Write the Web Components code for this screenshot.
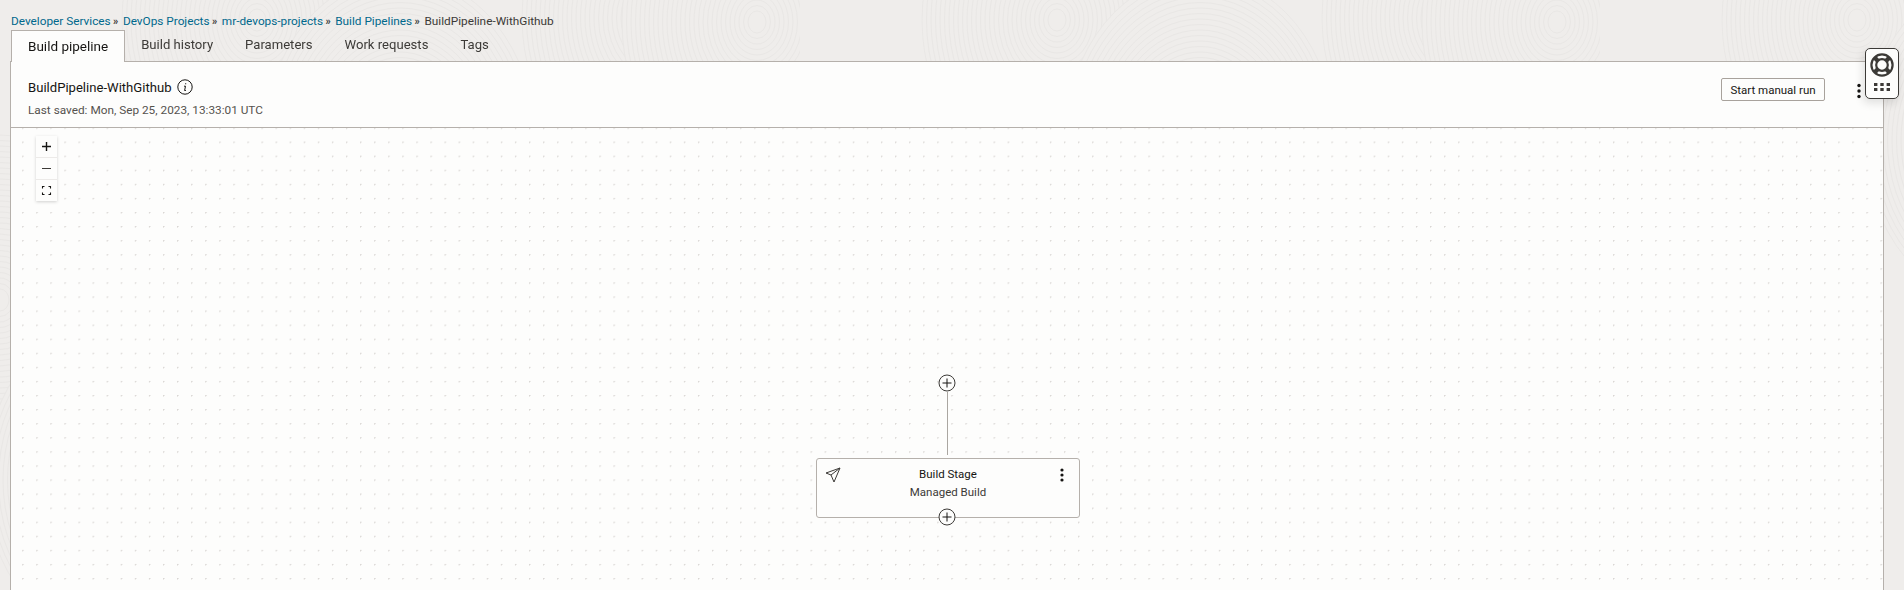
<!DOCTYPE html>
<html lang="en">
<head>
<meta charset="utf-8">
<title>BuildPipeline-WithGithub</title>
<style>
    html, body { margin: 0; height: 590px; overflow: hidden; }
    body { font-family: Roboto, "Liberation Sans", sans-serif; color: #161513; background: #efedeb; }
</style>
</head>
<body>
<pipeline-page></pipeline-page>
<help-widget></help-widget>

<script>
class CrumbTrail extends HTMLElement {
    constructor() {
        super();
        this.attachShadow({ mode: 'open' });
    }

    connectedCallback() {
        const links = ['Developer Services', 'DevOps Projects', 'mr-devops-projects', 'Build Pipelines'];
        this.shadowRoot.innerHTML = `
            <style>
                :host { display: flex; align-items: center; height: 30px; padding: 12px 0 0 11px; box-sizing: border-box; font-size: 11.8px; color: #3c3a37; }
                a { color: #00688c; text-decoration: none; }
                i { font-style: normal; margin: 0 4.6px 0 2.4px; font-size: 10.5px; font-weight: 700; }
            </style>
            ${links.map(l => `<a href="#">${l}</a><i>&raquo;</i>`).join('')}
            <span>BuildPipeline-WithGithub</span>
        `;
    }
}

class TabBar extends HTMLElement {
    constructor() {
        super();
        this.attachShadow({ mode: 'open' });
    }

    connectedCallback() {
        const tabs = ['Build pipeline', 'Build history', 'Parameters', 'Work requests', 'Tags'];
        this.shadowRoot.innerHTML = `
            <style>
                :host { display: flex; height: 32px; margin-left: 11px; position: relative; z-index: 1; font-size: 13.1px; color: #3c3a37; }
                div { padding: 0 16px; height: 29px; display: flex; align-items: center; }
                div.active { color: #161513; font-size: 13.5px; background: #fdfdfc; border: 1px solid #b5b0ab; border-bottom: none; height: 32px; padding: 0 16px 2px; box-sizing: border-box; }
            </style>
            ${tabs.map((t, i) => `<div class="${i === 0 ? 'active' : ''}">${t}</div>`).join('')}
        `;
    }
}

class PipelineHeader extends HTMLElement {
    constructor() {
        super();
        this.attachShadow({ mode: 'open' });
    }

    connectedCallback() {
        this.shadowRoot.innerHTML = `
            <style>
                :host { display: flex; justify-content: space-between; height: 66px; box-sizing: border-box; padding: 15px 21px 0 17px; background: #fdfdfc; border-bottom: 1px solid #b5b0ab; }
                .title { display: flex; align-items: center; gap: 5px; font-size: 13.1px; height: 20px; }
                .saved { margin-top: 5px; font-size: 11.8px; line-height: 16px; color: #55524e; }
                .actions { display: flex; align-items: flex-start; gap: 31px; padding-top: 1px; }
                button { font: inherit; font-size: 11.5px; height: 23px; width: 104px; padding: 1px 0 0; background: #fdfdfc; color: #161513; border: 1px solid #a8a29c; border-radius: 2px; }
                svg { display: block; }
            </style>
            <div>
                <div class="title">
                    <span>BuildPipeline-WithGithub</span>
                    <svg width="16" height="16" viewBox="0 0 16 16" fill="none" stroke="#161513">
                        <circle cx="8" cy="8" r="7.2"/>
                        <path d="M8.7 4.2v1.1M7 7.2h1.5L7.6 11.5h1.3"/>
                    </svg>
                </div>
                <div class="saved">Last saved: Mon, Sep 25, 2023, 13:33:01 UTC</div>
            </div>
            <div class="actions">
                <button>Start manual run</button>
                <svg width="6" height="16" viewBox="0 0 6 16" fill="#161513" style="margin-top:5px">
                    <circle cx="3" cy="2.5" r="1.7"/><circle cx="3" cy="8" r="1.7"/><circle cx="3" cy="13.5" r="1.7"/>
                </svg>
            </div>
        `;
    }
}

class ZoomControls extends HTMLElement {
    constructor() {
        super();
        this.attachShadow({ mode: 'open' });
    }

    connectedCallback() {
        this.shadowRoot.innerHTML = `
            <style>
                :host { display: block; position: absolute; left: 25px; top: 8px; width: 21px; background: #fdfdfc; box-shadow: 0 1px 3px rgba(0,0,0,.18); }
                div { height: 22px; display: flex; align-items: center; justify-content: center; border-bottom: 1px solid #eceae8; box-sizing: border-box; }
                div:last-child { border: none; height: 21px; }
            </style>
            <div><svg width="11" height="11" viewBox="0 0 11 11" stroke="#161513" stroke-width="1.4"><path d="M5.5 1v9M1 5.5h9"/></svg></div>
            <div><svg width="11" height="11" viewBox="0 0 11 11" stroke="#3c3a37"><path d="M1 5.5h9"/></svg></div>
            <div><svg width="11" height="11" viewBox="0 0 11 11" fill="none" stroke="#161513" stroke-width="1.1"><path d="M1.5 3.5v-2h2M7.5 1.5h2v2M9.5 7.5v2h-2M3.5 9.5h-2v-2"/></svg></div>
        `;
    }
}

class AddButton extends HTMLElement {
    constructor() {
        super();
        this.attachShadow({ mode: 'open' });
    }

    connectedCallback() {
        this.shadowRoot.innerHTML = `
            <style>:host { display: block; width: 18px; height: 18px; } svg { display: block; }</style>
            <svg width="18" height="18" viewBox="0 0 18 18" fill="#fdfdfc" stroke="#3c3a37">
                <circle cx="9" cy="9" r="8"/>
                <path d="M9 4.5v9M4.5 9h9" stroke="#161513"/>
            </svg>
        `;
    }
}

class StageNode extends HTMLElement {
    constructor() {
        super();
        this.attachShadow({ mode: 'open' });
    }

    connectedCallback() {
        this.shadowRoot.innerHTML = `
            <style>
                :host { display: block; position: absolute; width: 264px; height: 60px; box-sizing: border-box; background: #fdfdfc; border: 1.5px solid #b5b0ab; border-radius: 3px; text-align: center; }
                .name { font-size: 11.5px; margin-top: 7px; line-height: 16px; color: #161513; }
                .kind { font-size: 11.5px; margin-top: 2px; line-height: 16px; color: #3c3a37; }
                .send { position: absolute; left: 8px; top: 8px; }
                .menu { position: absolute; right: 14px; top: 9px; }
                add-button { position: absolute; left: 121px; top: 49px; }
            </style>
            <svg class="send" width="16" height="16" viewBox="0 0 16 16" fill="none" stroke="#3c3a37" stroke-linejoin="round">
                <path d="M1 6L15 1L9 15L6 8ZM6 8L15 1"/>
            </svg>
            <svg class="menu" width="6" height="14" viewBox="0 0 6 14" fill="#161513">
                <circle cx="3" cy="2" r="1.6"/><circle cx="3" cy="7" r="1.6"/><circle cx="3" cy="12" r="1.6"/>
            </svg>
            <div class="name"><slot name="name"></slot></div>
            <div class="kind"><slot name="kind"></slot></div>
            <add-button></add-button>
        `;
    }
}

class PipelineCanvas extends HTMLElement {
    constructor() {
        super();
        this.attachShadow({ mode: 'open' });
    }

    connectedCallback() {
        this.shadowRoot.innerHTML = `
            <style>
                :host { display: block; position: relative; height: 463px; overflow: hidden; background-color: #fdfdfc; background-image: radial-gradient(circle at 0.75px 0.75px, #d8d5d2 0.6px, transparent 0.9px); background-size: 14.08px 14.08px; background-position: 11.2px -0.5px; }
                add-button.top { position: absolute; left: 927px; top: 246px; }
                .line { position: absolute; left: 935.5px; top: 264px; width: 1.3px; height: 63px; background: #aaa6a1; }
                stage-node { left: 805px; top: 330px; }
            </style>
            <zoom-controls></zoom-controls>
            <add-button class="top"></add-button>
            <div class="line"></div>
            <stage-node>
                <span slot="name">Build Stage</span>
                <span slot="kind">Managed Build</span>
            </stage-node>
        `;
    }
}

class PipelinePage extends HTMLElement {
    constructor() {
        super();
        this.attachShadow({ mode: 'open' });
    }

    connectedCallback() {
        // fingerprint-like swirls of the page backdrop, one 800px tile
        const swirls = [[257, 20], [657, 18], [757, 22], [400, 140], [0, 300], [120, 480], [790, 420]];
        const rings = [];
        swirls.forEach(([cx, cy]) => {
            for (let r = 150; r > 6; r -= 5) {
                rings.push(`<ellipse cx="${cx}" cy="${cy}" rx="${r * 0.9}" ry="${r * 1.1}"/>`);
            }
        });
        this.shadowRoot.innerHTML = `
            <style>
                :host { display: block; position: relative; height: 590px; overflow: hidden; }
                .texture { position: absolute; left: 0; top: 0; }
                .content { position: relative; }
                .panel { margin: -1px 20px 0 10px; background: #fdfdfc; border: 1px solid #b5b0ab; border-bottom: none; }
            </style>
            <svg class="texture" width="1904" height="590">
                <defs>
                    <pattern id="swirl" width="800" height="590" patternUnits="userSpaceOnUse">
                        <g fill="#efedeb" stroke="#e9e7e5">${rings.join('')}</g>
                    </pattern>
                </defs>
                <rect width="1904" height="590" fill="url(#swirl)"/>
            </svg>
            <div class="content">
                <crumb-trail></crumb-trail>
                <tab-bar></tab-bar>
                <div class="panel">
                    <pipeline-header></pipeline-header>
                    <pipeline-canvas></pipeline-canvas>
                </div>
            </div>
        `;
    }
}

class HelpWidget extends HTMLElement {
    constructor() {
        super();
        this.attachShadow({ mode: 'open' });
    }

    connectedCallback() {
        this.shadowRoot.innerHTML = `
            <style>
                :host { display: flex; flex-direction: column; align-items: center; position: fixed; left: 1865px; top: 48px; width: 34px; height: 51px; box-sizing: border-box; background: #fdfdfc; border: 1px solid #3c3a37; border-radius: 5px; box-shadow: -2px 4px 10px rgba(0,0,0,.12); padding-top: 4px; }
                .grid { margin-top: 6px; }
                svg { display: block; flex: none; }
            </style>
            <svg width="24" height="24" viewBox="0 0 24 24" fill="none" stroke="#3c3a37">
                <circle cx="12" cy="12" r="10.6" stroke-width="2.2"/>
                <circle cx="12" cy="12" r="5.8" stroke-width="2.2"/>
                <path d="M4.5 4.5l3.5 3.5M19.5 4.5L16 8M4.5 19.5L8 16M19.5 19.5L16 16" stroke-width="4.4"/>
            </svg>
            <svg class="grid" width="16" height="8" viewBox="0 0 16 8" fill="#3c3a37">
                <rect x="0" y="0" width="3.4" height="3"/><rect x="6.3" y="0" width="3.4" height="3"/><rect x="12.6" y="0" width="3.4" height="3"/>
                <rect x="0" y="5" width="3.4" height="3"/><rect x="6.3" y="5" width="3.4" height="3"/><rect x="12.6" y="5" width="3.4" height="3"/>
            </svg>
        `;
    }
}

customElements.define('crumb-trail', CrumbTrail);
customElements.define('tab-bar', TabBar);
customElements.define('pipeline-header', PipelineHeader);
customElements.define('zoom-controls', ZoomControls);
customElements.define('add-button', AddButton);
customElements.define('stage-node', StageNode);
customElements.define('pipeline-canvas', PipelineCanvas);
customElements.define('pipeline-page', PipelinePage);
customElements.define('help-widget', HelpWidget);
</script>
</body>
</html>
